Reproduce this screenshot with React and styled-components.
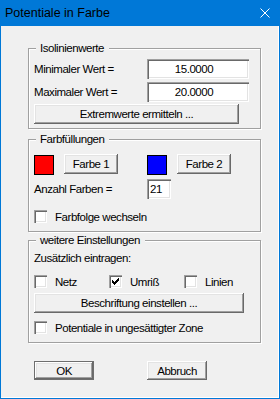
import React from 'react';
import styled, { createGlobalStyle } from 'styled-components';

const Global = createGlobalStyle`
  html, body { margin: 0; padding: 0; background: #ffffff; }
  body { font-family: "Liberation Sans", Arial, sans-serif; }
  * { box-sizing: border-box; }
`;

const Window = styled.div`
  width: 280px;
  height: 399px;
  display: flex;
  flex-direction: column;
  font-family: "Liberation Sans", Arial, sans-serif;
  font-size: 11.5px;
  letter-spacing: -0.45px;
  color: #000;
`;

const TitleBar = styled.div`
  height: 26px;
  flex: none;
  background: #0078d7;
  display: flex;
  align-items: center;
  justify-content: space-between;
  padding: 0 10px 0 5px;
  font-size: 12.5px;
  letter-spacing: 0;
  color: #000;
`;

const CloseIcon = styled.svg`
  width: 10px;
  height: 10px;
  display: block;
`;

const Body = styled.div`
  flex: 1;
  background: #f0f0f0;
  border: 1px solid #0078d7;
  border-top: none;
  box-shadow: inset -1px -1px 0 #ffffff;
  padding: 22px 0 0 27px;
  display: flex;
  flex-direction: column;
`;

const Group = styled.div`
  position: relative;
  width: 233px;
  border: 1px solid #a0a0a0;
  box-shadow: 1px 1px 0 #ffffff, inset 1px 1px 0 #ffffff;
  margin-top: ${p => p.$mt || 0}px;
  padding: ${p => p.$pt}px 0 ${p => p.$pb}px 5px;
  display: flex;
  flex-direction: column;
`;

const Legend = styled.span`
  position: absolute;
  left: 7px;
  top: -8px;
  height: 14px;
  line-height: 14px;
  padding: 0 5px 0 4px;
  background: #f0f0f0;
  white-space: nowrap;
`;

const FieldRow = styled.div`
  display: grid;
  grid-template-columns: 113px auto;
  align-items: center;
  height: 20px;
  margin-top: ${p => p.$mt || 0}px;
`;

const Label = styled.span`
  white-space: nowrap;
  line-height: 14px;
`;

const TextBox = styled.input`
  width: ${p => p.$w}px;
  height: 20px;
  border: none;
  outline: none;
  margin: 0;
  background: #ffffff;
  font: inherit;
  letter-spacing: inherit;
  color: #000;
  text-align: ${p => p.$align || 'center'};
  padding: ${p => (p.$align === 'left' ? '0 0 0 3px' : '0 8px 0 0')};
  box-shadow: inset 1px 1px 0 #a0a0a0, inset 2px 2px 0 #696969,
    inset -1px -1px 0 #ffffff, inset -2px -2px 0 #e3e3e3;
`;

const Button = styled.button`
  width: ${p => p.$w}px;
  height: ${p => p.$h || 20}px;
  margin: ${p => p.$mt || 0}px 0 0 0;
  padding: 0;
  background: #f0f0f0;
  font: inherit;
  letter-spacing: inherit;
  color: #000;
  border: ${p => (p.$default ? '1px solid #6e6e6e' : 'none')};
  box-shadow: inset -1px -1px 0 #696969, inset 1px 1px 0 #ffffff,
    inset -2px -2px 0 #a0a0a0, inset 2px 2px 0 #e3e3e3;
  display: flex;
  align-items: center;
  justify-content: center;
  white-space: nowrap;
`;

const ColorRow = styled.div`
  display: grid;
  grid-template-columns: 113px 113px;
  height: 20px;
`;

const ColorCell = styled.div`
  display: flex;
  align-items: flex-start;
  gap: 10px;
`;

const Swatch = styled.div`
  width: 20px;
  height: 20px;
  margin-top: 1px;
  border: 1px solid #000;
  background: ${p => p.$color};
`;

const CheckRow = styled.div`
  display: grid;
  grid-template-columns: ${p => p.$cols || 'auto'};
  height: 13px;
  margin-top: ${p => p.$mt || 0}px;
  align-items: center;
`;

const CheckItem = styled.div`
  display: flex;
  align-items: center;
  gap: 8px;
  white-space: nowrap;
`;

const Box = styled.div`
  width: 13px;
  height: 13px;
  flex: none;
  background: #ffffff;
  box-shadow: inset 1px 1px 0 #a0a0a0, inset 2px 2px 0 #696969,
    inset -1px -1px 0 #ffffff, inset -2px -2px 0 #e3e3e3;
  display: flex;
  align-items: center;
  justify-content: center;
`;

const TextRow = styled.div`
  height: 14px;
  line-height: 14px;
  white-space: nowrap;
`;

const Footer = styled.div`
  display: flex;
  gap: 53px;
  margin-top: 18px;
  padding-left: 6px;
`;

function Check({ label, checked }) {
  return (
    <CheckItem>
      <Box>
        {checked && (
          <svg width="9" height="9" viewBox="0 0 9 9" shapeRendering="crispEdges">
            <path
              d="M1 3h1v1h1v1h1V4h1V3h1V2h1V1h1v3h-1v1h-1v1h-1v1h-1v1h-1V7H2V6H1z"
              fill="#000"
            />
          </svg>
        )}
      </Box>
      <span>{label}</span>
    </CheckItem>
  );
}

export default function App() {
  return (
    <>
      <Global />
      <Window>
        <TitleBar>
          <span>Potentiale in Farbe</span>
          <CloseIcon viewBox="0 0 10 10">
            <path d="M0.5 0.5L9.5 9.5M9.5 0.5L0.5 9.5" stroke="#ffffff" strokeWidth="1" />
          </CloseIcon>
        </TitleBar>
        <Body>
          <Group $pt={10} $pb={4}>
            <Legend>Isolinienwerte</Legend>
            <FieldRow>
              <Label>Minimaler Wert =</Label>
              <TextBox $w={102} readOnly value="15.0000" />
            </FieldRow>
            <FieldRow $mt={3}>
              <Label>Maximaler Wert =</Label>
              <TextBox $w={102} readOnly value="20.0000" />
            </FieldRow>
            <Button $w={205} $mt={2}>Extremwerte ermitteln ...</Button>
          </Group>

          <Group $mt={10} $pt={14} $pb={8}>
            <Legend>Farbfüllungen</Legend>
            <ColorRow>
              <ColorCell>
                <Swatch $color="#ff0000" />
                <Button $w={54}>Farbe 1</Button>
              </ColorCell>
              <ColorCell>
                <Swatch $color="#0000ff" />
                <Button $w={54}>Farbe 2</Button>
              </ColorCell>
            </ColorRow>
            <FieldRow $mt={5}>
              <Label>Anzahl Farben =</Label>
              <TextBox $w={24} $align="left" readOnly value="21" />
            </FieldRow>
            <CheckRow $mt={11}>
              <Check label="Farbfolge wechseln" />
            </CheckRow>
          </Group>

          <Group $mt={8} $pt={10} $pb={8}>
            <Legend>weitere Einstellungen</Legend>
            <TextRow>Zusätzlich eintragen:</TextRow>
            <CheckRow $mt={10} $cols="75px 75px auto">
              <Check label="Netz" />
              <Check label="Umriß" checked />
              <Check label="Linien" />
            </CheckRow>
            <Button $w={210} $mt={5}>Beschriftung einstellen ...</Button>
            <CheckRow $mt={8}>
              <Check label="Potentiale in ungesättigter Zone" />
            </CheckRow>
          </Group>

          <Footer>
            <Button $w={60} $h={19} $default>OK</Button>
            <Button $w={60} $h={19}>Abbruch</Button>
          </Footer>
        </Body>
      </Window>
    </>
  );
}
